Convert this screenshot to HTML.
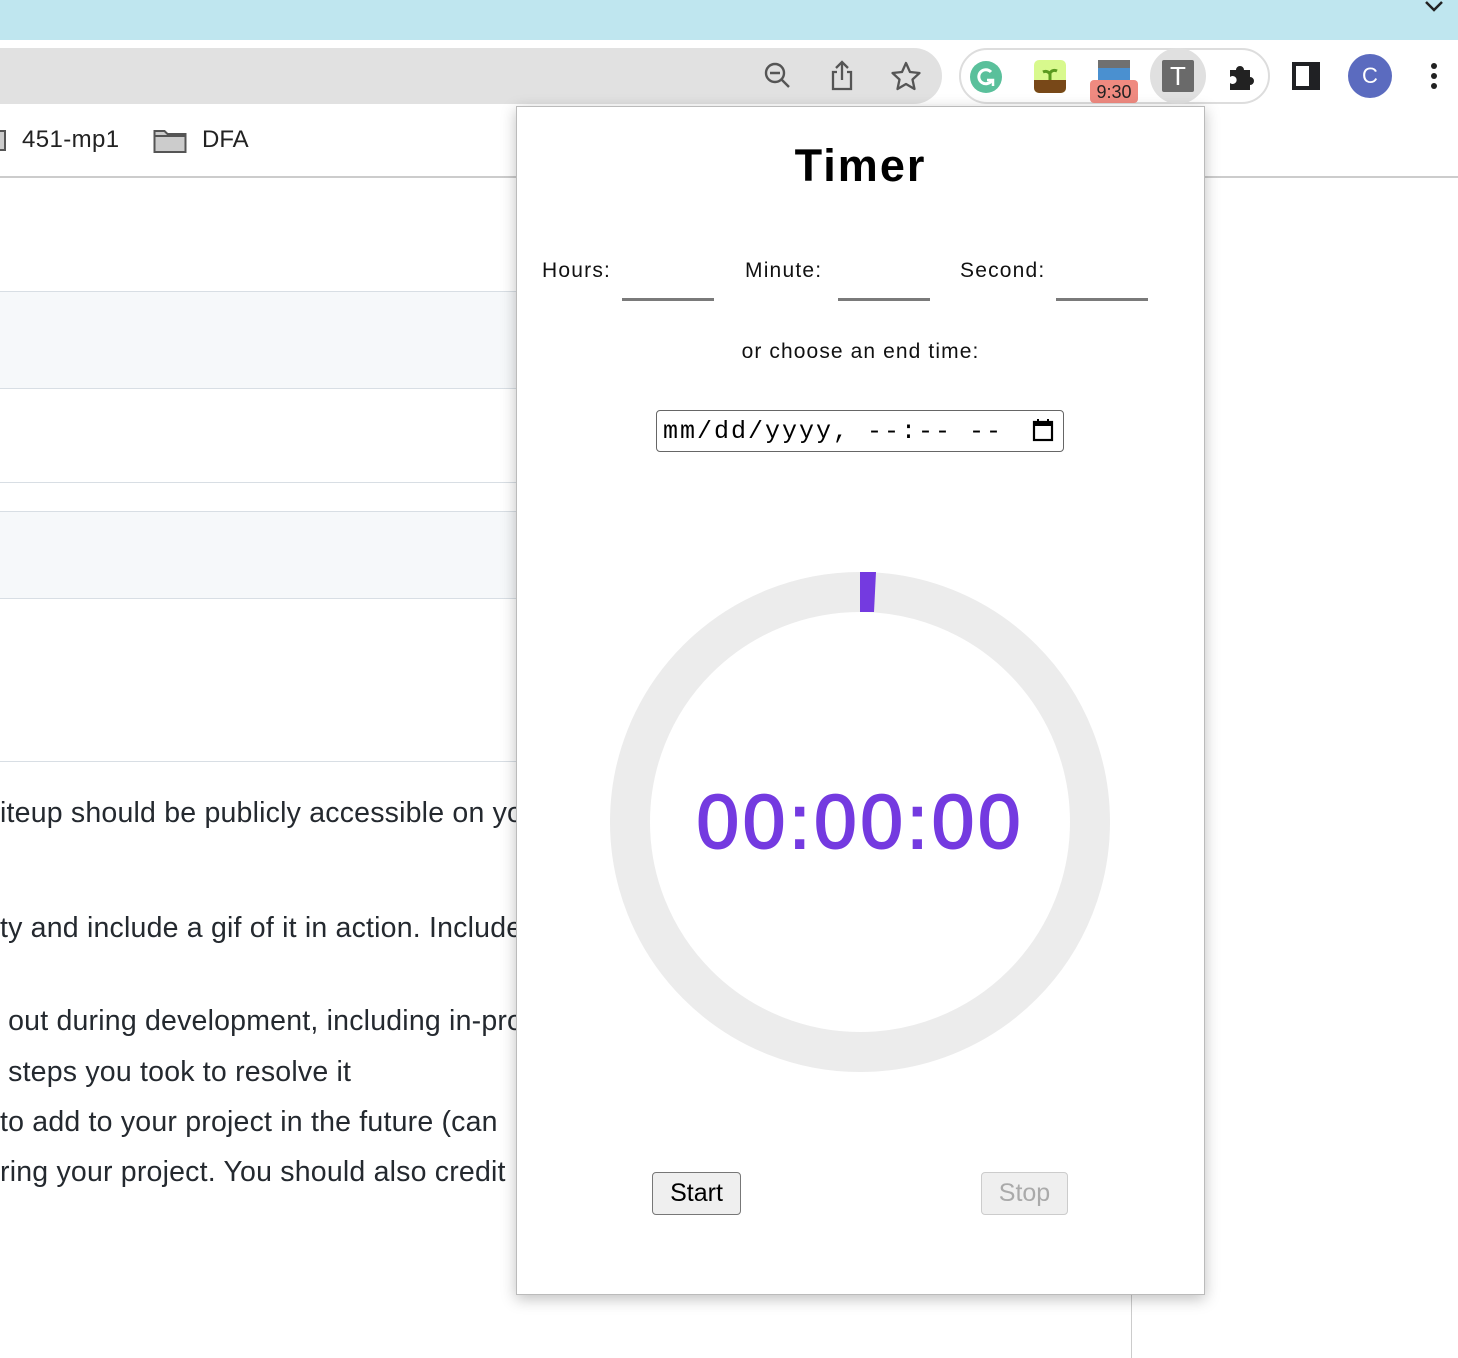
<!DOCTYPE html>
<html><head><meta charset="utf-8"><style>
*{margin:0;padding:0;box-sizing:border-box}
body{width:1458px;height:1358px;position:relative;overflow:hidden;background:#fff;font-family:"Liberation Sans",sans-serif}
.abs{position:absolute}
.ln{position:absolute;left:0;width:516px;height:1px;background:#d8dee4}
.bt{position:absolute;left:0;font-size:28.5px;color:#24292f;white-space:nowrap;line-height:30px;letter-spacing:.2px}
.lbl{position:absolute;font-size:21px;color:#111;letter-spacing:1.2px}
.uline{position:absolute;height:3px;background:#7a7a7a;width:92px;top:298px}
</style></head><body>
<div class="abs" style="left:0;top:0;width:1458px;height:40px;background:#bfe6ef"></div>
<svg class="abs" style="left:1424px;top:0" width="20" height="14"><path d="M2 2 L10 10 L18 2" stroke="#222" stroke-width="2.5" fill="none"/></svg>
<div class="abs" style="left:0;top:40px;width:1458px;height:64px;background:#fff"></div>
<div class="abs" style="left:-30px;top:48px;width:972px;height:56px;background:#e1e1e1;border-radius:28px"></div>
<svg class="abs" style="left:762px;top:60px" width="32" height="32"><circle cx="13" cy="13" r="9" stroke="#555" stroke-width="2.4" fill="none"/><path d="M8 13h10M20 20l7 7" stroke="#555" stroke-width="2.4"/></svg>
<svg class="abs" style="left:828px;top:58px" width="28" height="36"><path d="M9 14H5v17h18V14h-4M14 22V4M8 10l6-6 6 6" stroke="#555" stroke-width="2.3" fill="none"/></svg>
<svg class="abs" style="left:890px;top:60px" width="32" height="32"><path d="M16 3l4 9 9.5 1-7 6.5 2 9.5L16 24l-8.5 5 2-9.5-7-6.5 9.5-1z" stroke="#555" stroke-width="2.3" fill="none" stroke-linejoin="round"/></svg>
<div class="abs" style="left:959px;top:48px;width:311px;height:56px;border:2px solid #ddd;border-radius:28px"></div>
<div class="abs" style="left:970px;top:61px;width:32px;height:32px;border-radius:50%;background:#5ac09b"></div>
<svg class="abs" style="left:970px;top:61px" width="32" height="32"><path d="M21 11a7 7 0 1 0 1 8" stroke="#fff" stroke-width="3" fill="none"/><path d="M17 19h6v6" stroke="#fff" stroke-width="2.5" fill="none"/></svg>
<div class="abs" style="left:1034px;top:60px;width:32px;height:33px;border-radius:5px;background:#d8f98d;overflow:hidden"><div style="position:absolute;left:0;top:20px;width:32px;height:13px;background:#784818"></div></div>
<svg class="abs" style="left:1040px;top:62px" width="20" height="20"><path d="M10 18V10M10 12c-2-3-5-3-7-2M10 11c2-3 5-3 7-2" stroke="#5a9a20" stroke-width="3" fill="none"/></svg>
<div class="abs" style="left:1098px;top:60px;width:32px;height:24px;background:#4a90d0;border-top:8px solid #707070"></div>
<div class="abs" style="left:1090px;top:80px;width:48px;height:23px;background:#ef8a80;border-radius:4px;font-size:18px;color:#222;text-align:center;line-height:25px">9:30</div>
<div class="abs" style="left:1150px;top:48px;width:56px;height:56px;border-radius:50%;background:#e0e0e0"></div>
<div class="abs" style="left:1162px;top:60px;width:32px;height:32px;background:#6a6a6a;border-radius:2px;color:#fff;font-size:26px;text-align:center;line-height:32px">T</div>
<svg class="abs" style="left:1226px;top:60px" width="32" height="32"><path d="M4 10h6a4 4 0 1 1 8 0h6v7a4 4 0 1 1 0 8v5H4v-7a4 4 0 1 0 0-6z" fill="#222"/></svg>
<div class="abs" style="left:1292px;top:62px;width:28px;height:28px;border:4px solid #202124;border-right-width:11px"></div>
<div class="abs" style="left:1348px;top:54px;width:44px;height:44px;border-radius:50%;background:#5b6bbf;color:#fff;font-size:22px;text-align:center;line-height:44px">C</div>
<div class="abs" style="left:1431px;top:63px;width:6px;height:6px;border-radius:50%;background:#222"></div>
<div class="abs" style="left:1431px;top:73px;width:6px;height:6px;border-radius:50%;background:#222"></div>
<div class="abs" style="left:1431px;top:83px;width:6px;height:6px;border-radius:50%;background:#222"></div>
<div class="abs" style="left:-6px;top:130px;width:12px;height:21px;border:2px solid #555;background:#ccc"></div>
<div class="abs" style="left:22px;top:126px;font-size:24px;color:#222;letter-spacing:.4px">451-mp1</div>
<svg class="abs" style="left:153px;top:128px" width="34" height="26"><path d="M1.5 3h10l3 3h18v18h-31z" fill="#ccc" stroke="#555" stroke-width="2"/><path d="M1.5 8h31" stroke="#555" stroke-width="2"/></svg>
<div class="abs" style="left:202px;top:126px;font-size:24px;color:#222">DFA</div>
<div class="abs" style="left:0;top:176px;width:1458px;height:2px;background:#ccc"></div>
<div class="abs" style="left:0;top:292px;width:516px;height:96px;background:#f6f8fa"></div>
<div class="abs" style="left:0;top:512px;width:516px;height:86px;background:#f6f8fa"></div>
<div class="ln" style="top:291px"></div><div class="ln" style="top:388px"></div><div class="ln" style="top:482px"></div><div class="ln" style="top:511px"></div><div class="ln" style="top:598px"></div><div class="ln" style="top:761px"></div>
<div class="bt" style="top:798px">iteup should be publicly accessible on your</div>
<div class="bt" style="top:913px">ty and include a gif of it in action. Include</div>
<div class="bt" style="top:1006px">&nbsp;out during development, including in-pro</div>
<div class="bt" style="top:1057px">&nbsp;steps you took to resolve it</div>
<div class="bt" style="top:1107px">to add to your project in the future (can</div>
<div class="bt" style="top:1157px">ring your project. You should also credit</div>
<div class="abs" style="left:1131px;top:1294px;width:1px;height:64px;background:#ccc"></div>
<div class="abs" style="left:516px;top:106px;width:689px;height:1189px;background:#fff;border:1px solid #bbb;box-shadow:0 4px 14px rgba(0,0,0,.25)"></div>
<div class="abs" style="left:516px;top:140px;width:689px;text-align:center;font-size:45px;font-weight:bold;letter-spacing:2px;color:#000">Timer</div>
<div class="lbl" style="left:542px;top:259px">Hours:</div>
<div class="lbl" style="left:745px;top:259px">Minute:</div>
<div class="lbl" style="left:960px;top:259px">Second:</div>
<div class="uline" style="left:622px"></div><div class="uline" style="left:838px"></div><div class="uline" style="left:1056px"></div>
<div class="abs" style="left:516px;top:340px;width:689px;text-align:center;font-size:21px;color:#111;letter-spacing:1.1px">or choose an end time:</div>
<div class="abs" style="left:656px;top:410px;width:408px;height:42px;border:1.5px solid #666;border-radius:4px;font-family:'Liberation Mono',monospace;font-size:25px;line-height:42px;padding-left:6px;color:#000;white-space:pre;letter-spacing:2px">mm/dd/yyyy, --:-- --</div>
<svg class="abs" style="left:1032px;top:418px" width="22" height="24"><rect x="2" y="4" width="18" height="18" fill="none" stroke="#000" stroke-width="2.2"/><rect x="2" y="4" width="18" height="4" fill="#000"/><path d="M6 1v5M16 1v5" stroke="#000" stroke-width="2"/></svg>
<svg class="abs" style="left:600px;top:562px" width="520" height="520"><circle cx="260" cy="260" r="230" stroke="#ececec" stroke-width="40" fill="none"/><path d="M260 10 L276 10 L274 50 L260 50 Z" fill="#743ae0"/></svg>
<div class="abs" style="left:516px;top:780px;width:689px;text-align:center;font-size:76px;color:#743ae0;line-height:86px;letter-spacing:4px;-webkit-text-stroke:2px #743ae0">00:00:00</div>
<div class="abs" style="left:652px;top:1172px;width:89px;height:43px;border:1.5px solid #777;border-radius:4px;background:#efefef;font-size:25px;text-align:center;line-height:40px;color:#000">Start</div>
<div class="abs" style="left:981px;top:1172px;width:87px;height:43px;border:1.5px solid #ccc;border-radius:4px;background:#efefef;font-size:25px;text-align:center;line-height:40px;color:#aaa">Stop</div>
</body></html>
